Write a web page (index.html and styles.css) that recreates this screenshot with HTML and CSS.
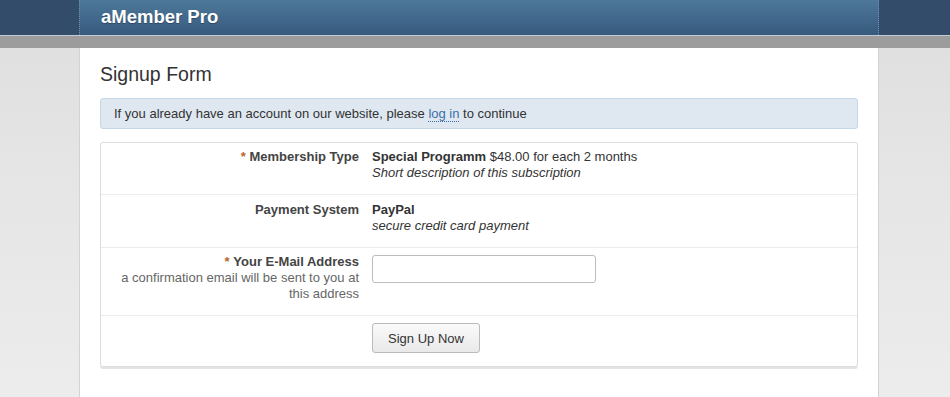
FILE: index.html
```html
<!DOCTYPE html>
<html>
<head>
<meta charset="utf-8">
<link rel="stylesheet" href="styles.css">
</head>
<body>
<div class="header">
  <div class="header-inner">
    <div class="logo">aMember Pro</div>
  </div>
</div>
<div class="band"></div>
<div class="page">
  <div class="content">
    <h1 class="title">Signup Form</h1>
    <div class="info">If you already have an account on our website, please <a class="login" href="#">log in</a> to continue</div>
    <div class="form">
      <div class="row">
        <div class="label"><span class="req">*</span> <b>Membership Type</b></div>
        <div class="value">
          <div><b>Special Programm</b> $48.00 for each 2 months</div>
          <div class="desc">Short description of this subscription</div>
        </div>
      </div>
      <div class="row row-pay">
        <div class="label"><b>Payment System</b></div>
        <div class="value">
          <div><b>PayPal</b></div>
          <div class="desc">secure credit card payment</div>
        </div>
      </div>
      <div class="row">
        <div class="label"><span class="req">*</span> <b>Your E-Mail Address</b>
          <div class="hint">a confirmation email will be sent to you at this address</div>
        </div>
        <div class="value"><input class="email" type="text"></div>
      </div>
      <div class="row last">
        <div class="label"></div>
        <div class="value"><button class="btn">Sign Up Now</button></div>
      </div>
    </div>
  </div>
</div>
</body>
</html>
```
FILE: styles.css
```css
html, body {
  margin: 0;
  padding: 0;
}
body {
  font-family: "Liberation Sans", Arial, sans-serif;
  font-size: 13px;
  color: #333;
  background: linear-gradient(#dedede 0px, #e6e6e6 200px, #ececec 397px);
  min-height: 397px;
}
.header {
  background: #334c69;
  height: 35px;
  border-bottom: 1px solid #c3ccd6;
}
.header-inner {
  width: 798px;
  margin-left: 79px;
  height: 35px;
  border-left: 1px dotted #6c8fb0;
  border-right: 1px dotted #6c8fb0;
  background: linear-gradient(#4d7899, #40668a 60%, #375a7b);
  box-sizing: content-box;
}
.logo {
  color: #fff;
  font-weight: bold;
  font-size: 18.5px;
  line-height: 34px;
  padding-left: 21px;
  text-shadow: 0 1px 1px rgba(0,0,0,0.3);
}
.band {
  height: 12px;
  background: #9c9c9c;
}
.page {
  width: 798px;
  margin-left: 79px;
  border-left: 1px solid #d3d3d3;
  border-right: 1px solid #d3d3d3;
  background: #fff;
  min-height: 349px;
}
.content {
  padding: 15px 20px 20px 20px;
}
.title {
  margin: 0 0 13px 0;
  font-size: 19.5px;
  line-height: 22px;
  font-weight: normal;
  color: #333;
}
.info {
  background: #dfe8f1;
  border: 1px solid #c5d6e6;
  border-radius: 3px;
  padding: 6px 13px;
  line-height: 17px;
}
.login {
  color: #3b6fa8;
  text-decoration: none;
  border-bottom: 1px dotted #3b6fa8;
}
.form {
  margin-top: 13px;
  border: 1px solid #dcdcdc;
  border-radius: 3px;
  box-shadow: 0 2px 0 #e4e4e4;
}
.row {
  display: grid;
  grid-template-columns: 271px 1fr;
  border-bottom: 1px solid #ececec;
  padding: 6px 0 13px 0;
  line-height: 16px;
}
.row.row-pay {
  padding-top: 7px;
}
.row.last {
  border-bottom: none;
  padding: 7px 0 13px 0;
}
.label {
  text-align: right;
  padding-right: 13px;
  color: #444;
}
.req {
  color: #b9652f;
  font-weight: bold;
}
.hint {
  color: #666;
  font-weight: normal;
}
.value {
  color: #333;
}
.desc {
  font-style: italic;
}
.email {
  display: block;
  width: 224px;
  height: 28px;
  box-sizing: border-box;
  border: 1px solid #bcbcbc;
  border-radius: 3px;
  margin: 1px 0 0 0;
  font: inherit;
}
.btn {
  display: block;
  width: 108px;
  height: 30px;
  box-sizing: border-box;
  border: 1px solid #bbb;
  border-radius: 3px;
  background: linear-gradient(#fafafa, #e9e9e9);
  font-family: "Liberation Sans", Arial, sans-serif;
  font-size: 13px;
  color: #333;
  padding: 0;
}
```
